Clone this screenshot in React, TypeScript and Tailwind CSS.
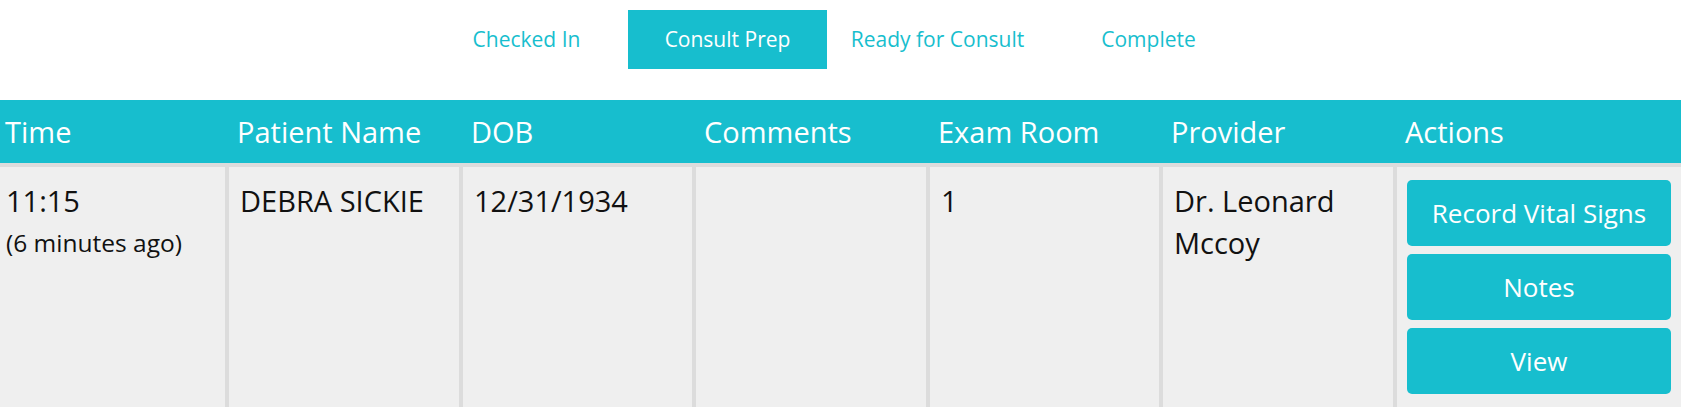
import React from "react";

const tabs = [
  { label: "Checked In", className: "ml-0 text-[#17bece]" },
  { label: "Consult Prep", className: "ml-[2px] bg-[#17bece] text-white" },
  { label: "Ready for Consult", className: "ml-[11px] text-[#17bece]" },
  { label: "Complete", className: "ml-[12px] text-[#17bece]" },
];

const headers = ["Time", "Patient Name", "DOB", "Comments", "Exam Room", "Provider", "Actions"];

const cols = "grid grid-cols-[225px_234px_233px_234px_233px_234px_1fr]";

const ActionButton: React.FC<{ label: string }> = ({ label }) => (
  <button className="h-[66px] w-full rounded-[5px] bg-[#17bece] text-white text-[26px] flex items-center justify-center">
    {label}
  </button>
);

export default function App() {
  return (
    <div className="w-[1681px] h-[414px] overflow-hidden bg-white font-['Open_Sans',sans-serif]">
      <nav className="flex h-[100px] pl-[427px] pt-[10px]">
        {tabs.map((t) => (
          <div key={t.label} className={`w-[199px] h-[59px] flex items-center justify-center text-[21px] pt-[1px] ${t.className}`}>
            {t.label}
          </div>
        ))}
      </nav>

      <div className={`${cols} h-[67px] items-center bg-[#17bece] text-white text-[29px] border-b-4 border-[#dcdcdc]`}>
        {headers.map((h, i) => (
          <div key={h} className={i === 0 ? "pl-[5px]" : "pl-[12px]"}>
            {h}
          </div>
        ))}
      </div>

      <div className={`${cols} bg-[#efefef] text-[#111] text-[29px] leading-[42px]`}>
        <div className="pl-[6px] pt-[13px]">
          <div>11:15</div>
          <div className="text-[24.5px] leading-[36px] mt-[3px]">(6 minutes ago)</div>
        </div>
        <div className="border-l-4 border-[#dcdcdc] pl-[11px] pt-[13px]">DEBRA SICKIE</div>
        <div className="border-l-4 border-[#dcdcdc] pl-[11px] pt-[13px]">12/31/1934</div>
        <div className="border-l-4 border-[#dcdcdc] pl-[11px] pt-[13px]"></div>
        <div className="border-l-4 border-[#dcdcdc] pl-[11px] pt-[13px]">1</div>
        <div className="border-l-4 border-[#dcdcdc] pl-[11px] pt-[13px]">Dr. Leonard Mccoy</div>
        <div className="border-l-4 border-[#dcdcdc] pl-[10px] pr-[10px] pt-[13px] pb-[13px] flex flex-col gap-[8px]">
          <ActionButton label="Record Vital Signs" />
          <ActionButton label="Notes" />
          <ActionButton label="View" />
        </div>
      </div>
    </div>
  );
}
